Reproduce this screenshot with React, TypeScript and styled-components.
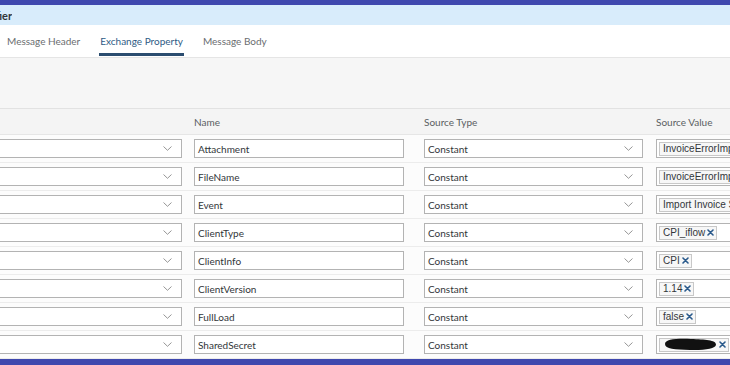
import React from "react";
import styled, { createGlobalStyle } from "styled-components";

const GlobalStyle = createGlobalStyle`
  html, body {
    margin: 0;
    padding: 0;
    width: 730px;
    height: 365px;
    overflow: hidden;
    background: #ffffff;
    font-family: "Lato", "Open Sans", sans-serif;
  }
`;

interface Row {
  name: string;
  value: string;
  token: boolean;
  redacted?: boolean;
}

const rows: Row[] = [
  { name: "Attachment", value: "InvoiceErrorImport", token: false },
  { name: "FileName", value: "InvoiceErrorImport", token: false },
  { name: "Event", value: "Import Invoice Status", token: false },
  { name: "ClientType", value: "CPI_iflow", token: true },
  { name: "ClientInfo", value: "CPI", token: true },
  { name: "ClientVersion", value: "1.14", token: true },
  { name: "FullLoad", value: "false", token: true },
  { name: "SharedSecret", value: "", token: true, redacted: true },
];

const Page = styled.div`
  width: 730px;
  height: 365px;
  display: flex;
  flex-direction: column;
  overflow: hidden;
`;

const TopBar = styled.div`
  height: 5px;
  background: #3f48ae;
  flex-shrink: 0;
`;

const BottomBar = styled.div`
  height: 8px;
  background: #3f48ae;
  flex-shrink: 0;
  margin-top: auto;
`;

const TitleBar = styled.div`
  height: 20px;
  background: #d8ecfb;
  display: flex;
  align-items: center;
  flex-shrink: 0;
`;

const TitleClip = styled.div`
  width: 12px;
  overflow: hidden;
  display: flex;
  justify-content: flex-end;
`;

const Title = styled.span`
  white-space: nowrap;
  font-weight: 700;
  font-size: 11px;
  color: #32363a;
`;

const TabBar = styled.div`
  height: 32px;
  background: #ffffff;
  border-bottom: 1px solid #e5e5e5;
  display: flex;
  align-items: stretch;
  padding-left: 6px;
  gap: 18px;
  flex-shrink: 0;
`;

const Tab = styled.div<{ $active?: boolean }>`
  display: flex;
  align-items: center;
  font-size: 10px;
  color: ${(p) => (p.$active ? "#2f5b85" : "#6a6d70")};
  border-bottom: 3px solid ${(p) => (p.$active ? "#2b4d70" : "transparent")};
  padding: 3px 1px 0;
  margin-bottom: 1px;
`;

const Toolbar = styled.div`
  height: 50px;
  background: #f6f6f6;
  border-bottom: 1px solid #e2e2e2;
  flex-shrink: 0;
`;

const Grid = styled.div`
  display: grid;
  grid-template-columns: 194px 230px 232px 1fr;
`;

const HeadCell = styled.div`
  height: 26px;
  display: flex;
  align-items: center;
  background: #f4f4f4;
  border-bottom: 1px solid #e6e6e6;
  font-size: 10px;
  color: #5a5e62;
  box-sizing: border-box;
`;

const Cell = styled.div`
  height: 28px;
  display: flex;
  align-items: center;
  background: #fcfcfc;
  border-bottom: 1px solid #ececec;
  box-sizing: border-box;
  overflow: hidden;
`;

const Field = styled.div<{ $w: number; $noLeft?: boolean }>`
  width: ${(p) => p.$w}px;
  height: 19px;
  box-sizing: border-box;
  border: 1px solid #b3b3b3;
  ${(p) => (p.$noLeft ? "border-left: none;" : "")}
  background: #ffffff;
  display: flex;
  align-items: center;
  padding: 0 3px;
  font-size: 10px;
  color: #32363a;
  flex-shrink: 0;
`;

const FieldText = styled.span`
  flex: 1;
  white-space: nowrap;
`;

const Chevron = styled.svg`
  width: 9px;
  height: 5px;
  margin-right: 6px;
  flex-shrink: 0;
`;

const ValueBox = styled.div`
  width: 110px;
  height: 19px;
  box-sizing: border-box;
  border: 1px solid #b3b3b3;
  border-right: none;
  background: #ffffff;
  display: flex;
  align-items: center;
  padding: 0 2px;
  flex-shrink: 0;
`;

const Token = styled.span`
  display: inline-flex;
  align-items: center;
  height: 14px;
  box-sizing: border-box;
  border: 1px solid #c8c8c8;
  background: #f7f7f7;
  padding: 0 2px 0 3px;
  font-family: "Liberation Sans", Arial, sans-serif;
  font-size: 10px;
  color: #32363a;
  white-space: nowrap;
  gap: 2px;
`;

const RemoveIcon = styled.svg`
  width: 7px;
  height: 7px;
  flex-shrink: 0;
`;

const Scribble = styled.svg`
  width: 54px;
  height: 13px;
`;

const ChevronIcon = () => (
  <Chevron viewBox="0 0 9 5">
    <path d="M0.5 0.5 L4.5 4.3 L8.5 0.5" fill="none" stroke="#8a8a8a" strokeWidth="0.9" />
  </Chevron>
);

const Remove = () => (
  <RemoveIcon viewBox="0 0 7 7">
    <path d="M1 1 L6 6 M6 1 L1 6" stroke="#2a5a8c" strokeWidth="1.6" strokeLinecap="round" />
  </RemoveIcon>
);

export default function App() {
  return (
    <Page>
      <GlobalStyle />
      <TopBar />
      <TitleBar>
        <TitleClip>
          <Title>Content Modifier</Title>
        </TitleClip>
      </TitleBar>
      <TabBar>
        <Tab>Message Header</Tab>
        <Tab $active>Exchange Property</Tab>
        <Tab>Message Body</Tab>
      </TabBar>
      <Toolbar />
      <Grid>
        <HeadCell />
        <HeadCell>Name</HeadCell>
        <HeadCell>Source Type</HeadCell>
        <HeadCell>Source Value</HeadCell>
        {rows.map((r) => (
          <React.Fragment key={r.name}>
            <Cell>
              <Field $w={182} $noLeft>
                <FieldText />
                <ChevronIcon />
              </Field>
            </Cell>
            <Cell>
              <Field $w={210}>
                <FieldText>{r.name}</FieldText>
              </Field>
            </Cell>
            <Cell>
              <Field $w={219}>
                <FieldText>Constant</FieldText>
                <ChevronIcon />
              </Field>
            </Cell>
            <Cell>
              <ValueBox>
                <Token>
                  {r.redacted ? (
                    <Scribble viewBox="0 0 54 13">
                      <path
                        d="M2 6 C2 1 14 0.5 28 1 C42 1.5 53 2 53 6.5 C53 11 40 12.5 27 12 C12 11.5 2 11 2 6 Z"
                        fill="#111111"
                      />
                    </Scribble>
                  ) : (
                    r.value
                  )}
                  {r.token && <Remove />}
                </Token>
              </ValueBox>
            </Cell>
          </React.Fragment>
        ))}
      </Grid>
      <BottomBar />
    </Page>
  );
}
